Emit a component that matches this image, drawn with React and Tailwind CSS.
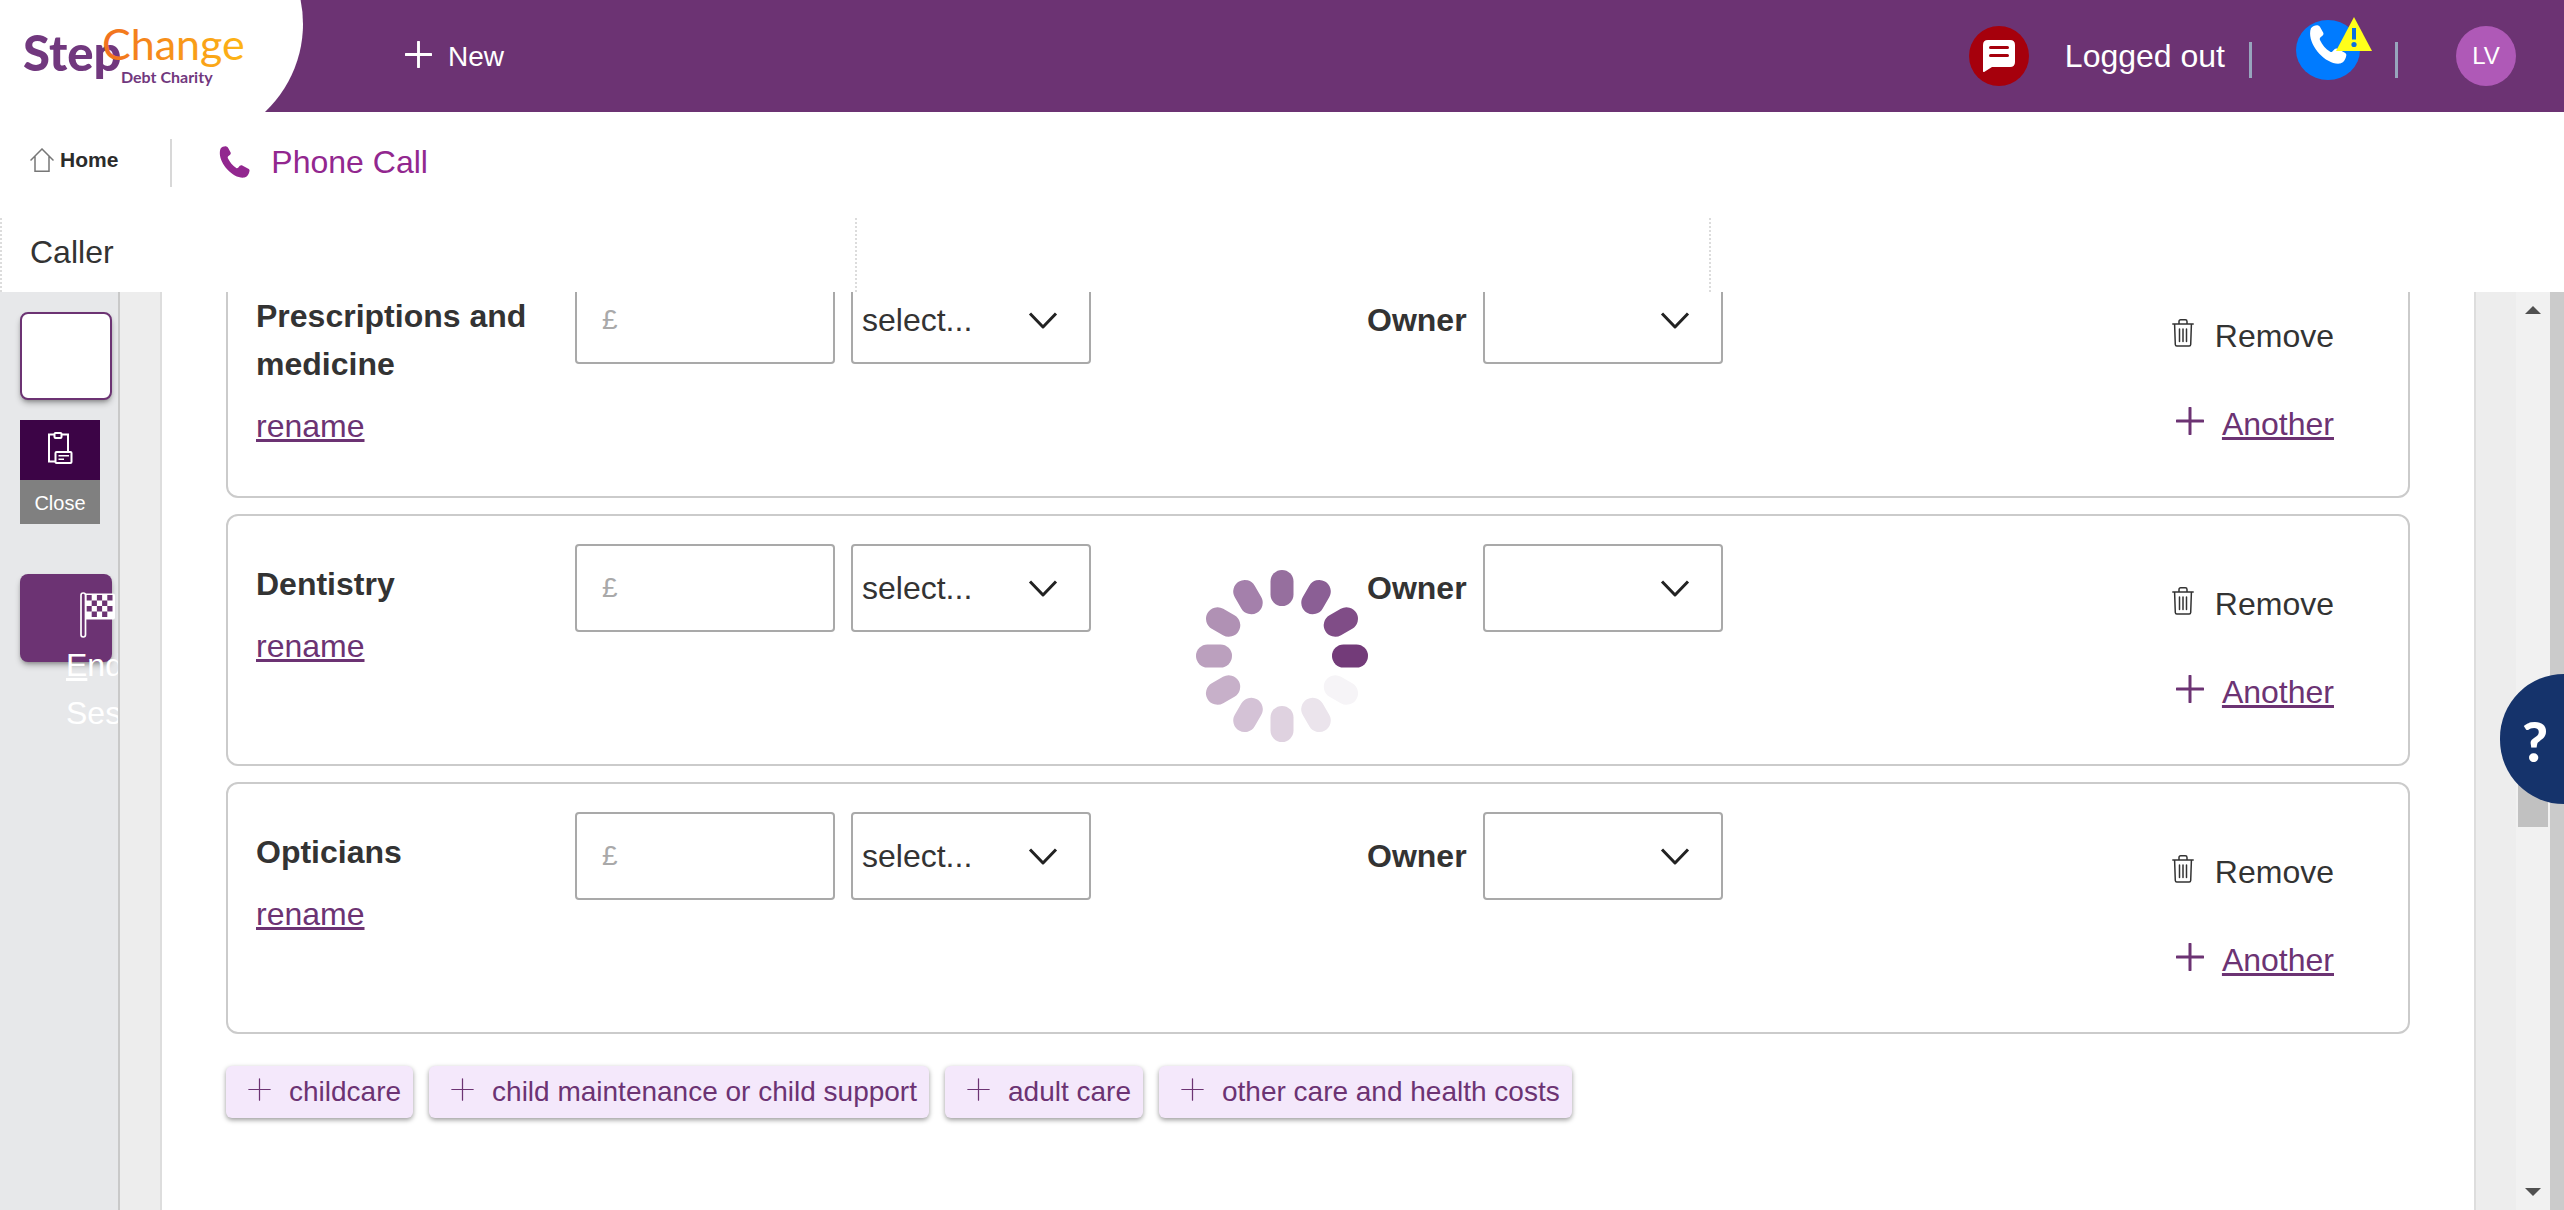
import React from "react";

const expenses = [
  { id: "prescriptions", name: "Prescriptions and medicine" },
  { id: "dentistry", name: "Dentistry" },
  { id: "opticians", name: "Opticians" },
];

const suggestions = [
  "childcare",
  "child maintenance or child support",
  "adult care",
  "other care and health costs",
];

const spokes = [
  "#733b79", "#804d87", "#8b5f95", "#966f9e", "#a480ab", "#b091b4",
  "#bba0be", "#c7b0c9", "#d4c2d6", "#dfd2e0", "#ebe4ec", "#f6f4f7",
];

const handset =
  "M1.500 2.700C3 .8 5.600 0 7.400.4c.8.2 1.400.9 1.800 1.600l2.300 4.200c.5.9.3 1.800-.4 2.500l-1.900 1.600c-.5.6-.6 1.300-.3 2C10.800 16.300 13.500 19.600 17.300 22c.6.4 1.300.2 1.800-.3l1.700-1.900c.8-.7 1.700-.8 2.500-.3l6 3.300c.9.5 1.400 1.300 1.200 2.300-.5 3.200-2.300 6-5 6.500C13.600 33.400-2.800 15 1.500 2.700Z";

function Handset({ className }) {
  return (
    <svg className={className} viewBox="0 0 31 32" fill="currentColor" aria-hidden="true">
      <path d={handset} />
    </svg>
  );
}

function Plus({ className, width }) {
  return (
    <svg className={className} viewBox="0 0 28 28" fill="none" stroke="currentColor" strokeWidth={width} strokeLinecap="round" aria-hidden="true">
      <path d="M14 1v26M1 14h26" />
    </svg>
  );
}

function Logo() {
  return (
    <svg className="h-28 w-[304px] shrink-0" viewBox="0 0 304 112" role="img" aria-label="StepChange Debt Charity">
      <defs>
        <linearGradient id="orange" x1="0" y1="0" x2="1" y2="0">
          <stop offset="0" stopColor="#f1701f" />
          <stop offset="1" stopColor="#fdb614" />
        </linearGradient>
      </defs>
      <path fill="#fff" d="M0 0H300.600A121 121 0 0 1 265 112H0Z" />
      <g fontFamily="Lato, 'Open Sans', sans-serif">
        <text x="23" y="71" fontSize="49" fontWeight="900" fill="#71387e">Step</text>
        <text x="102" y="60" fontSize="43" fill="url(#orange)">Change</text>
        <text x="121" y="83" fontSize="16" fontWeight="700" fill="#71387e">Debt Charity</text>
      </g>
    </svg>
  );
}

function Header() {
  return (
    <header className="flex h-28 shrink-0 items-center bg-[#6c3373] pr-12 text-white">
      <a href="#home" className="shrink-0"><Logo /></a>
      <button type="button" className="ml-[101px] flex items-center gap-4 pt-0.5 text-[28px] leading-8">
        <Plus className="mb-1.5 size-[27px]" width={3} />
        New
      </button>
      <div className="ml-auto flex items-center">
        <button type="button" aria-label="Messages" className="flex size-[60px] items-center justify-center rounded-full bg-[#a6000c]">
          <svg className="h-8 w-8" viewBox="0 0 32 32" fill="none" aria-hidden="true">
            <path fill="#fff" d="M0 5Q0 0 5 0H27Q32 0 32 5V22Q32 27 27 27H9L1.500 31.800Q0 32.500 0 31Z" />
            <path stroke="#a6000c" strokeWidth="3" strokeLinecap="round" d="M7.500 7.500H24.500M7.500 15.500H24.500" />
          </svg>
        </button>
        <span className="ml-9 text-[32px] leading-10">Logged out</span>
        <span className="ml-6 mt-2 h-9 w-[3px] bg-[#97a5bd]" />
        <button type="button" aria-label="Phone disconnected" className="relative mb-3 ml-11 flex h-[60px] w-16 items-center justify-center rounded-[50%] bg-[#007bff]">
          <Handset className="mb-3 h-[39px] w-[38px]" />
          <svg className="absolute -right-3 -top-[3px] h-[34px] w-9" viewBox="0 0 36 34" aria-hidden="true">
            <path fill="#ffff1a" d="M18 0 36 34H0Z" />
            <path stroke="#0a6fe0" strokeWidth="4" d="M18 11V22.500" />
            <circle cx="18" cy="27.500" r="2.600" fill="#0a6fe0" />
          </svg>
        </button>
        <span className="ml-[35px] mt-2 h-9 w-[3px] bg-[#97a5bd]" />
        <button type="button" className="ml-[58px] size-[60px] rounded-full bg-[#af59b7] text-2xl">LV</button>
      </div>
    </header>
  );
}

function SubNav() {
  return (
    <nav className="flex h-[106px] shrink-0 items-center bg-white px-[30px] pb-2">
      <a href="#home" className="flex items-center gap-1.5 pb-0.5 text-[21px] font-bold leading-8 text-[#2b2b2b]">
        <svg className="h-6 w-6" viewBox="0 0 24 24" fill="none" stroke="#777" strokeWidth="1.500" aria-hidden="true">
          <path d="M.5 12.500 12 1 23.500 12.500M5 8.500V23.200H19V8.500" />
        </svg>
        Home
      </a>
      <span className="ml-[52px] mt-1 h-12 w-0.5 bg-[#d8d8d8]" />
      <a href="#phone-call" className="ml-[47px] mt-0.5 flex items-center gap-[21px] text-[32px] leading-10 text-[#92278f]">
        <Handset className="h-8 w-[31px]" />
        Phone Call
      </a>
    </nav>
  );
}

function CallerBar() {
  const cell = "border-l-2 border-dotted border-[#dcdcdc] px-7 pt-0.5";
  return (
    <section className="grid h-[74px] shrink-0 grid-cols-3 bg-white text-[32px] leading-[64px] text-[#333]">
      <div className={cell}>Caller</div>
      <div className={cell} />
      <div className={cell} />
    </section>
  );
}

function Flag() {
  const squares = [];
  for (let r = 0; r < 4; r++)
    for (let c = 0; c < 5; c++)
      if ((r + c) % 2 === 0) squares.push(<rect key={r + "-" + c} x={6.5 + c * 5.2} y={3 + r * 5.5} width="5.200" height="5.500" fill="#6c3373" />);
  return (
    <svg className="ml-3.5 h-[46px] w-[35px] shrink-0" viewBox="0 0 35 46" fill="none" aria-hidden="true">
      <rect x="4" y="1.500" width="31" height="26" rx="2" fill="#fff" />
      {squares}
      <rect x="1" y="1" width="4.500" height="44" rx="2.200" fill="#6c3373" stroke="#fff" strokeWidth="1.700" />
    </svg>
  );
}

function Sidebar() {
  return (
    <aside className="flex w-[120px] shrink-0 flex-col items-start overflow-hidden border-r-2 border-[#c9c9c9] bg-[#e7e8ea] pl-5 pt-5">
      <button type="button" aria-label="Notes" className="h-[88px] w-[92px] shrink-0 rounded-lg border-2 border-[#6c3373] bg-white shadow-md shadow-black/30" />
      <button type="button" className="mt-5 w-20 text-xl text-white">
        <span className="flex h-[60px] items-center justify-center bg-[#3c0446]">
          <svg className="mb-1 h-8 w-[26px]" viewBox="0 0 26 32" fill="none" stroke="#fff" strokeWidth="2" aria-hidden="true">
            <path d="M7 2.500H2V29.500H8M15 2.500H21V19" />
            <rect x="7.500" y="1" width="7" height="5" rx="1" />
            <rect x="8.500" y="20" width="16" height="11" rx="1" />
            <path strokeWidth="1.500" d="M11.500 23.700H22M11.500 27.200H17" />
          </svg>
        </span>
        <span className="block h-11 bg-[#808080] leading-[46px]">Close</span>
      </button>
      <button type="button" className="mt-[50px] flex h-[88px] w-[92px] shrink-0 flex-col items-start justify-start rounded-lg bg-[#6c3373] pl-[46px] pt-[18px] text-left text-[32px] leading-[48px] text-white shadow-md shadow-black/30">
        <Flag />
        <span className="mt-[3px] whitespace-nowrap">
          <span className="underline decoration-[3px] underline-offset-2">E</span>nd<br />Session
        </span>
      </button>
    </aside>
  );
}

function Dropdown({ id, label, options }) {
  return (
    <div className="grid w-60 items-center">
      <select id={id} aria-label={label} className="col-start-1 row-start-1 h-[88px] appearance-none rounded border-2 border-[#a9a9a9] bg-white pl-[9px] pr-16 text-[32px] text-[#333]">
        {options.map((o) => <option key={o}>{o}</option>)}
      </select>
      <svg className="pointer-events-none col-start-1 row-start-1 mr-[33px] h-[17px] w-[30px] justify-self-end" viewBox="0 0 30 17" fill="none" stroke="#222" strokeWidth="3" strokeLinejoin="round" aria-hidden="true">
        <path d="M2 1.500 15 15 28 1.500" />
      </svg>
    </div>
  );
}

function ExpenseCard({ id, name }) {
  return (
    <li className="grid grid-cols-[319px_792px_1fr_auto] items-start rounded-xl border-2 border-[#cbcbcb] bg-white pl-7 pr-[74px] text-[32px] leading-[48px] text-[#333]">
      <div className="pt-11">
        <h3 className="pr-8 font-bold">{name}</h3>
        <a href={"#rename-" + id} className="mt-3.5 inline-block text-[#6c3373] underline decoration-[3px] underline-offset-2">rename</a>
      </div>
      <div className="flex gap-4 pt-7">
        <input type="text" aria-label={name + " amount"} placeholder="£" className="h-[88px] w-[260px] rounded border-2 border-[#a9a9a9] px-[25px] text-[28px] placeholder:text-[#a9a9a9]" />
        <Dropdown id={"freq-" + id} label={name + " frequency"} options={["select...", "weekly", "monthly"]} />
      </div>
      <div className="flex items-center gap-4 pt-7">
        <label htmlFor={"owner-" + id} className="font-bold">Owner</label>
        <Dropdown id={"owner-" + id} options={[""]} />
      </div>
      <div className="flex flex-col items-end gap-10 pb-12 pt-16">
        <button type="button" className="flex items-center gap-[21px]">
          <svg className="mb-1.5 h-7 w-[22px]" viewBox="0 0 22 28" fill="none" stroke="#333" strokeWidth="1.500" strokeLinecap="round" aria-hidden="true">
            <path d="M.8 5H21.200M7 4.800V2.500Q7 .8 8.700.8H13.300Q15 .8 15 2.500V4.800M2.600 5.200 3.300 25.500Q3.400 27 4.800 27H17.200Q18.600 27 18.700 25.500L19.400 5.200M7.500 10V22.500M11 10V22.500M14.500 10V22.500" />
          </svg>
          Remove
        </button>
        <a href={"#another-" + id} className="flex items-center gap-[18px] text-[#6c3373]">
          <Plus className="mb-1.5 size-7" width={3} />
          <span className="underline decoration-[3px] underline-offset-2">Another</span>
        </a>
      </div>
    </li>
  );
}

function Spinner() {
  return (
    <svg className="fixed left-1/2 top-[570px] size-[172px] -translate-x-1/2" viewBox="-86 -86 172 172" role="img" aria-label="Loading">
      {spokes.map((fill, i) => (
        <rect key={fill} x="50" y="-11.500" width="36" height="23" rx="11.500" fill={fill} transform={`rotate(${-30 * i})`} />
      ))}
    </svg>
  );
}

function Scrollbar() {
  return (
    <div className="flex w-[34px] shrink-0 flex-col items-center bg-[#f1f1f1] pb-3.5 pt-3.5" aria-hidden="true">
      <svg className="h-2 w-4" viewBox="0 0 16 8"><path fill="#505050" d="M8 0 16 8H0Z" /></svg>
      <span className="flex-[54]" />
      <span className="h-20 w-[30px] bg-[#c1c1c1]" />
      <span className="flex-[45]" />
      <svg className="h-2 w-4" viewBox="0 0 16 8"><path fill="#505050" d="M0 0H16L8 8Z" /></svg>
    </div>
  );
}

export default function App() {
  return (
    <div className="flex h-screen flex-col overflow-hidden bg-white font-['Liberation_Sans',Arial,sans-serif]">
      <Header />
      <SubNav />
      <CallerBar />
      <div className="flex min-h-0 flex-1">
        <Sidebar />
        <main className="flex min-w-0 flex-1 overflow-hidden bg-[#ededed] px-10">
          <div className="flex-1 border-x-2 border-[#dddddd] bg-white px-16">
            <ul className="-mt-[46px] flex flex-col gap-4">
              {expenses.map((e) => <ExpenseCard key={e.id} {...e} />)}
            </ul>
            <div className="mt-8 flex flex-wrap gap-4">
              {suggestions.map((s) => (
                <button key={s} type="button" className="flex h-[52px] items-center gap-[18px] rounded-md bg-[#f4e8fb] pl-[22px] pr-3 text-[28px] leading-8 text-[#6c3373] shadow-[0_2px_5px_rgba(0,0,0,0.4)]">
                  <Plus className="mb-1.5 size-[23px]" width={1.5} />
                  {s}
                </button>
              ))}
            </div>
          </div>
        </main>
        <Scrollbar />
        <div className="w-3.5 shrink-0 bg-[#cbcbcb]" />
      </div>
      <Spinner />
      <button type="button" aria-label="Help" className="fixed right-0 top-[674px] h-[130px] w-16 rounded-l-full bg-[#15336b] pl-1.5 pt-1 font-['Lato',sans-serif] text-[56px] font-black text-white">?</button>
    </div>
  );
}
